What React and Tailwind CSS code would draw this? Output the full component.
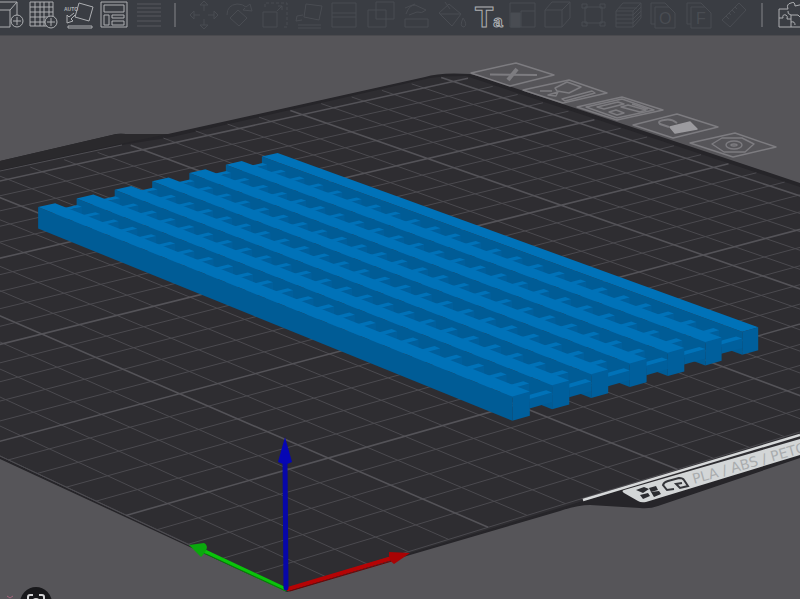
import React from "react";

// Bed coordinates are millimetres, z is a fraction of the model height.
const project = (x, y, z = 0) => {
  const u = x / 50 - 1;
  const v = y / 50 - 1;
  const w = 1 + 0.036 * u + 0.038 * v;
  const px = (328 + 206.5 * u - 141.6 * v) / w;
  const py = (458 - 38.8 * u - 49.3 * v - 24.8 * z) / w;
  return `${px.toFixed(1)},${py.toFixed(1)}`;
};

const poly = (...pts) => pts.map((p) => project(...p)).join(" ");

const TOP = "#0072b8";
const SIDE = "#005c96";
const FRONT = "#005f9c";

function Box({ x1, x2, y1, y2, z1, z2 }) {
  return (
    <g>
      <polygon
        fill={SIDE}
        points={poly([x1, y1, z1], [x1, y2, z1], [x1, y2, z2], [x1, y1, z2])}
      />
      <polygon
        fill={FRONT}
        points={poly([x1, y1, z1], [x2, y1, z1], [x2, y1, z2], [x1, y1, z2])}
      />
      <polygon
        fill={TOP}
        points={poly([x1, y1, z2], [x2, y1, z2], [x2, y2, z2], [x1, y2, z2])}
      />
    </g>
  );
}

const beams = [6, 5, 4, 3, 2, 1, 0];
const bars = Array.from({ length: 24 }, (_, i) => 23 - i);

function Model() {
  return (
    <g>
      {beams.map((i) => {
        const x = 93 + i * 10.93;
        return (
          <g key={i}>
            <Box x1={x} x2={x + 4.8} y1={43} y2={213} z1={0} z2={1} />
            {i > 0 &&
              bars.map((b) => {
                const y = 43 + b * 7.3;
                return (
                  <Box key={b} x1={x - 6.2} x2={x} y1={y} y2={y + 1.9} z1={0.3} z2={0.7} />
                );
              })}
          </g>
        );
      })}
    </g>
  );
}

function Grid() {
  const steps = Array.from({ length: 26 }, (_, i) => i * 10);
  const line = (a, b) => `M${project(...a)}L${project(...b)}`;
  const draw = (list) =>
    list.map((s) => line([s, 0], [s, 255]) + line([0, s], [255, s])).join("");
  const isMajor = (s) => s > 0 && s % 50 === 0;
  return (
    <g fill="none">
      <path d={draw(steps.filter((s) => !isMajor(s)))} stroke="#4b4a4f" />
      <path d={draw(steps.filter(isMajor))} stroke="#545358" strokeWidth="1.6" />
    </g>
  );
}

function PlateIcons() {
  return (
    <g fill="none" stroke="#7d7c80" strokeWidth="1.4" strokeLinejoin="round">
      <path d="M471 73L516 63L554 75L510 86Z" />
      <path d="M490 74.500L537 75" strokeWidth="2" />
      <path d="M508 80L517 69" strokeWidth="4" />
      <path d="M523 90L569 80L607 93L563 103Z" />
      <path d="M555 88L567 82L581 87L569 93L557 91ZM562 99L592 91L595 93L565 101Z" />
      <path d="M540 91L552 91M548 95L558 92L556 96Z" />
      <path d="M577 107L622 97L663 110L617 120Z" />
      <path d="M586 107L622 99L654 110L617 118Z" />
      <path d="M597 107L618 102L624 104L604 109ZM609 112L616 110L624 113L617 115ZM621 107L628 105L646 110L640 112ZM632 104L648 109" />
      <path d="M633 125L677 114L718 127L673 138Z" />
      <path d="M669 127L660 124Q657 121 664 120Q671 118 677 123" strokeWidth="2" />
      <path d="M670 127L690 122L697 129L675 133Z" fill="#9c9b9f" stroke="#9c9b9f" />
      <path d="M690 143L735 133L776 147L733 157Z" />
      <path d="M712 144L722 138L742 138L754 144L745 152L724 152Z" />
      <ellipse cx="734" cy="145" rx="8" ry="4" />
      <ellipse cx="734" cy="145" rx="3" ry="1" />
    </g>
  );
}

function BrandStrip() {
  return (
    <g>
      <path d="M583 500L800 435" stroke="#d6d8d9" strokeWidth="2.500" />
      <path d="M624 490L800 439V455L646 502Q641 503 638 501L624 493Q621 491 624 490Z" fill="#d3d6d7" />
      <g fill="#2b2c30">
        <path d="M636 490L644 487L649 489L643 493Z" />
        <path d="M649 488L656 486L658 490L651 492Z" />
        <path d="M640 495L648 493L650 496L643 499Z" />
        <path d="M651 492L659 491L661 494L654 497Z" />
      </g>
      <path
        d="M674 489L667 490L663 485Q664 482 668 481L679 478Q683 478 684 480L688 486L680 488L676 484L682 483"
        fill="none"
        stroke="#34353a"
        strokeWidth="2"
      />
      <text
        transform="translate(694 484) rotate(-16)"
        fill="#a9acae"
        fontFamily="'DejaVu Sans', sans-serif"
        fontSize="14"
      >
        PLA / ABS / PETG
      </text>
    </g>
  );
}

function Axes() {
  return (
    <g strokeLinecap="round">
      <path d="M285 589L204 551" stroke="#0bc30b" strokeWidth="4" />
      <path d="M286 591L206 554" stroke="#077a09" strokeWidth="1" />
      <path d="M189 545L204 543Q211 547 201 557Z" fill="#0aa80d" />
      <path d="M288 589L392 558" stroke="#b50405" strokeWidth="4" />
      <path d="M290 591L392 561" stroke="#6d0506" strokeWidth="1" />
      <path d="M410 553L389 552Q388 560 394 564Z" fill="#a90304" />
      <path d="M286 588L285 460" stroke="#0707a8" strokeWidth="5" />
      <path d="M285 437L278 462Q285 466 292 462Z" fill="#0606b4" />
    </g>
  );
}

function Scene() {
  return (
    <svg
      className="block h-full w-full"
      viewBox="0 36 800 563"
      preserveAspectRatio="xMidYMid slice"
      role="img"
      aria-label="Build plate"
    >
      <path
        d="M0 161L112 135Q118 133 126 134L168 134L425 77Q440 72 470 74L482 77L800 183V458L658 506Q650 509 640 508L590 505Q578 505 560 511L410 555L287 592L0 459Z"
        fill="#262529"
      />
      <path
        d={`M${project(0, 0)}L${project(0, 256)}L0 171L122 145L172 137L430 78Q442 76 466 76L800 187V440L583 501L410 553Z`}
        fill="#2e2d31"
      />
      <path d="M0 171L122 145M0 456L284 589" fill="none" stroke="#504f54" />
      <Grid />
      <path d="M0 161L112 135Q118 133 126 134L168 134L120 144L0 170Z" fill="#2a292c" />
      <PlateIcons />
      <BrandStrip />
      <Model />
      <Axes />
    </svg>
  );
}

const plus = (cx, cy) => (
  <>
    <circle cx={cx} cy={cy} r="6" fill="#3a3d43" />
    <path d={`M${cx - 4} ${cy}h8M${cx} ${cy - 4}v8`} />
  </>
);

const leftTools = [
  {
    name: "Add",
    on: true,
    icon: (
      <>
        <path d="M0 9H16V26H0M16 9L23 1V16M6 1H23M0 7L6 1" />
        {plus(23, 20)}
      </>
    ),
  },
  {
    name: "Add plate",
    on: true,
    icon: (
      <>
        <path d="M1 1H24V25H1ZM6 1V25M11 1V25M15 1V25M20 1V25M1 6H24M1 11H24M1 16H24M1 21H24" />
        {plus(22, 21)}
      </>
    ),
  },
  {
    name: "Auto orient",
    on: true,
    icon: (
      <>
        <path d="M15 2L29 6L25 20L11 16ZM4 25H28V27H4Z" />
        <path d="M10 12L5 16L3 14V22L9 20L7 18L11 14" />
        <text x="0" y="10" fontSize="5" fontWeight="bold" fill="currentColor" stroke="none">
          AUTO
        </text>
      </>
    ),
  },
  {
    name: "Arrange",
    on: true,
    icon: <path d="M2 1H28V26H2ZM5 4H25V11H5ZM5 14H10V24H5ZM13 14H25V17H13ZM13 20H25V24H13Z" />,
  },
  {
    name: "Layers",
    dim: true,
    icon: <path d="M3 3H27M3 7H27M3 11H27M3 15H27M3 20H27M3 25H27" />,
  },
];

const tools = [
  {
    name: "Move",
    icon: (
      <path d="M15 10V4H11L15 0L19 4H15M15 18V24H11L15 28L19 24H15M11 14H5V10L1 14L5 18V14M19 14H25V10L29 14L25 18V14" />
    ),
  },
  {
    name: "Rotate",
    icon: <path d="M3 14Q3 4 13 3Q19 3 22 6L26 3L28 10L19 9L21 7M14 9L23 17L15 25L6 17Z" />,
  },
  {
    name: "Scale",
    icon: (
      <>
        <path d="M3 11H17V26H3Z" />
        <path d="M5 6V2H27V26H22" strokeDasharray="3 2" />
        <path d="M17 10L22 5M18 5H22V9" />
      </>
    ),
  },
  {
    name: "Place on face",
    icon: <path d="M11 3L27 5L24 19L9 16ZM8 14L2 15L1 20L7 19M3 24H26M3 27H26" />,
  },
  { name: "Cut", icon: <path d="M2 2H26V12H2ZM2 16H26V26H2ZM2 12V16M26 12V16" /> },
  {
    name: "Boolean",
    icon: (
      <>
        <path d="M2 9H20V26H2Z" />
        <path d="M10 1H28V18H10Z" />
      </>
    ),
  },
  {
    name: "Support painting",
    icon: <path d="M4 18H27V26H4ZM5 13Q8 4 14 4L25 9Q21 13 16 11L8 14M4 7L14 3" />,
  },
  {
    name: "Color painting",
    icon: <path d="M2 12L12 3L24 13L15 25ZM3 13H24M8 1L13 8M26 17Q31 24 27 26Q22 26 26 17" />,
  },
  {
    name: "Text",
    on: true,
    icon: (
      <text x="3" y="26" fontSize="30" fontWeight="bold">
        T<tspan fontSize="17">a</tspan>
      </text>
    ),
  },
  {
    name: "Seam",
    icon: (
      <>
        <path d="M2 2H27V26H2ZM13 10H27M13 10V26" />
        <path d="M3 12H12V26H3Z" fill="currentColor" />
      </>
    ),
  },
  {
    name: "Variable height",
    icon: <path d="M2 9H19V26H2ZM2 9L9 1H27L19 9M27 1V17L19 26" />,
  },
  {
    name: "Assembly",
    icon: <path d="M6 6H23V22H6ZM3 3H8V7H3ZM21 3H26V7H21ZM3 21H8V25H3ZM21 21H26V25H21Z" />,
  },
  {
    name: "Layer view",
    icon: (
      <path d="M2 10H19V26H2ZM2 10L9 2H27L19 10M27 2V17L19 26M2 14H19L27 6M2 18H19L27 10M2 22H19L27 14M5 7H23" />
    ),
  },
  {
    name: "Objects",
    icon: (
      <>
        <path d="M6 23H2V2H16L20 6M6 6H20L26 12V27H6Z" />
        <text x="10" y="23" fontSize="16" stroke="none" fill="currentColor">
          O
        </text>
      </>
    ),
  },
  {
    name: "Filament",
    icon: (
      <>
        <path d="M6 23H2V2H16L20 6M6 6H20L26 12V27H6Z" />
        <text x="11" y="23" fontSize="16" stroke="none" fill="currentColor">
          F
        </text>
      </>
    ),
  },
  {
    name: "Measure",
    icon: <path d="M2 19L19 2L26 9L10 26ZM6 15L9 18M9 12L11 14M12 9L15 12M15 6L17 8" />,
  },
];

function ToolButton({ tool }) {
  const tone = tool.on
    ? "text-[#adafb2]"
    : tool.dim
      ? "text-[#56585e]"
      : "text-[#494c52]";
  return (
    <button
      type="button"
      aria-label={tool.name}
      className={`flex h-7 min-w-0 flex-1 items-center justify-center ${tone}`}
    >
      <svg
        className="h-7 w-7 shrink-0 overflow-visible"
        viewBox="0 0 28 28"
        fill="none"
        stroke="currentColor"
        fontFamily="'Liberation Sans', sans-serif"
      >
        {tool.icon}
      </svg>
    </button>
  );
}

const puzzle = {
  name: "Assembly view",
  on: true,
  icon: (
    <path d="M3 8H12Q10 3 15 2Q19 0 19 5L28 3V26H3ZM3 17H7Q6 13 10 14Q12 15 11 18H15V26M15 18V14Q11 13 12 10M15 14L22 14Q24 18 28 16M15 21Q19 20 19 24" />
  ),
};

export default function App() {
  return (
    <div className="flex h-screen flex-col overflow-hidden bg-[#565559]">
      <header className="flex h-9 shrink-0 items-start overflow-hidden border-b border-[#4a4a4e] bg-[#3a3d43] pt-px">
        <div className="-ml-2.5 flex w-[175px] shrink-0">
          {leftTools.map((t) => (
            <ToolButton key={t.name} tool={t} />
          ))}
        </div>
        <div className="flex w-5 shrink-0 justify-center pt-0.5">
          <span className="h-6 w-0.5 bg-[#5f6166]" />
        </div>
        <div className="flex min-w-0 flex-1">
          {tools.map((t) => (
            <ToolButton key={t.name} tool={t} />
          ))}
        </div>
        <div className="flex w-5 shrink-0 justify-center pt-0.5">
          <span className="h-6 w-0.5 bg-[#5f6166]" />
        </div>
        <div className="-mr-2 flex w-9 shrink-0">
          <ToolButton tool={puzzle} />
        </div>
      </header>
      <main className="relative min-h-0 flex-1 overflow-hidden">
        <Scene />
        <button
          type="button"
          aria-label="Scan"
          className="absolute -bottom-5 left-5 flex h-8 w-8 items-center justify-center rounded-full bg-[#18181b] text-[#d4d4d6]"
        >
          <svg className="h-5 w-5" viewBox="0 0 20 20" fill="none" stroke="currentColor" strokeWidth="2">
            <path d="M2 7V4Q2 2 4 2H7M13 2H16Q18 2 18 4V7M2 13V18H7M13 18H18V13" />
            <circle cx="10" cy="10" r="4" />
          </svg>
        </button>
        <svg
          className="absolute bottom-0 left-1.5 h-1 w-2"
          viewBox="0 0 8 4"
          fill="none"
          stroke="#a5647c"
          aria-hidden="true"
        >
          <path d="M1 1L4 3L7 1" />
        </svg>
      </main>
    </div>
  );
}
